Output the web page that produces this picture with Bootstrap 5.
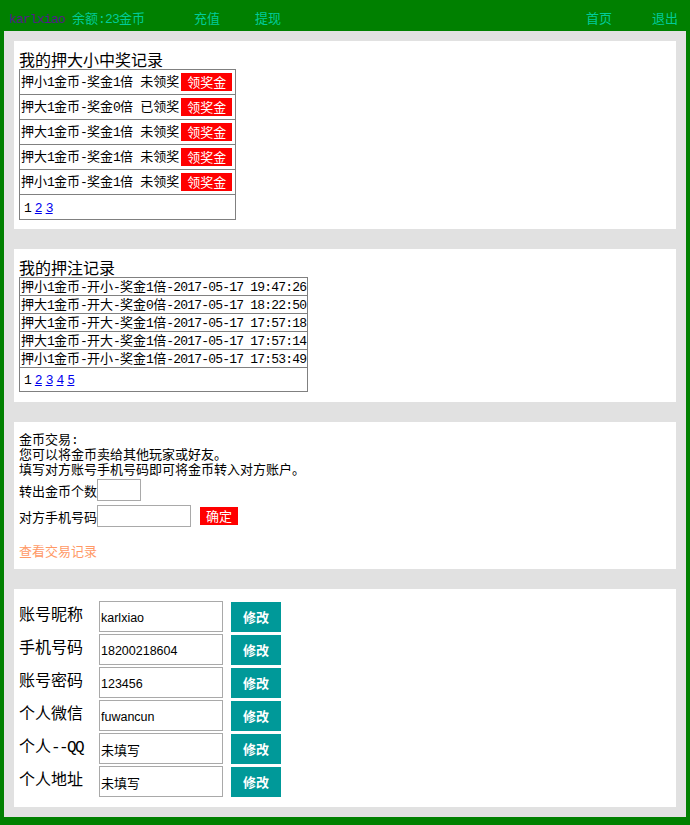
<!DOCTYPE html>
<html lang="zh-CN">
<head>
<meta charset="utf-8">
<title>我的账户</title>
<link href="https://cdn.jsdelivr.net/npm/bootstrap@5.3.0/dist/css/bootstrap.min.css" rel="stylesheet">
<style>
html,body{height:825px;overflow:hidden}
body{background:#008000;font-family:"Noto Sans CJK SC","Liberation Sans",sans-serif;font-size:13px;line-height:15px;color:#000;font-weight:400}
.ml{font-family:"Liberation Mono","Noto Sans CJK SC",monospace;font-size:13px;letter-spacing:-.8px;line-height:0}
.top-strip{height:31px;color:#00cc99;padding:10px 12px 0 9px;white-space:nowrap}
.top-strip a{color:#00cc99;text-decoration:none}
.top-strip .who{color:#551a8b;width:63px;line-height:15px;padding-top:2px}
.top-strip .bal{width:122px}
.top-strip .lnk{width:61px}
.top-strip .out{width:66px}
.top-strip .lnk-end{width:26px}
.sheet{background:#e1e1e1;margin:0 4px;padding:10px;height:786px}
.pane{background:#fff;padding:9px 5px 10px;margin-bottom:20px}
.pane:last-child{margin-bottom:0}
.pane-1{height:188px}.pane-2{height:153px}.pane-3{height:147px}.pane-4{height:218px;padding-top:12px}
.pane-title{font-size:16px;line-height:18px;height:19px}
.rec{border:1px solid #808080;border-collapse:collapse}
.rec td{border:1px solid #808080;padding:0 1px;white-space:nowrap;vertical-align:middle}
.rec-a tr{height:25px}
.rec-b td{height:18px;line-height:13px;padding-bottom:2px}
.rec td.pager{height:24px;padding:0 0 2px 4px;line-height:13px}
.pager-text{word-spacing:-3.2px}
.rec .pager a{color:#0000ee}
.pay-btn{display:inline-block;background:#f00;color:#fff;width:51px;height:18px;line-height:18px;text-align:center;border:0;padding:0;border-radius:0;font-size:13px;margin:0 2px 0 2px;vertical-align:middle}
.trade-row{height:22px;margin-top:4px}
.trade-row.first{margin-top:3px}
.trade-field{height:22px;border:1px solid #a9a9a9;padding:0 2px;border-radius:0;background:#fff;outline:0}
.w-a{width:44px}.w-b{width:94px}
.ok-btn{background:#f00;color:#fff;width:38px;height:18px;line-height:18px;border:0;padding:0;border-radius:0;font-size:13px;margin-left:9px}
.trade-link{display:block;color:#ff9966;text-decoration:none;margin-top:16px}
.acct-row{height:31px;margin-bottom:2px;font-size:16px}
.acct-row .ml{font-size:16px;letter-spacing:-1.6px;font-weight:400}
.acct-label{width:80px;line-height:18px;height:26px}
.acct-field{width:124px;height:31px;border:1px solid #a9a9a9;border-radius:0;padding:2px 1px 0;font-size:12.5px;font-family:"Liberation Sans",sans-serif;color:#000;outline:0;background:#fff}
.acct-field.cjk{font-family:"Noto Sans CJK SC",sans-serif;font-size:13px}
.fix-btn{width:50px;height:30px;background:#009999;color:#fff;border:0;border-radius:0;padding:0;margin-left:8px;font-size:13px;font-weight:700;align-self:flex-end;line-height:30px}
</style>
</head>
<body>
<div class="top-strip d-flex">
  <a class="who ml" href="#">karlxiao</a>
  <span class="bal">余额<span class="ml">:23</span>金币</span>
  <a class="lnk" href="#">充值</a>
  <a class="lnk-end" href="#">提现</a>
  <a class="out ms-auto" href="#">首页</a>
  <a class="lnk-end" href="#">退出</a>
</div>
<div class="sheet">
  <div class="pane pane-1">
    <div class="pane-title">我的押大小中奖记录</div>
    <table class="rec rec-a">
      <tr><td>押小<span class="ml">1</span>金币<span class="ml">-</span>奖金<span class="ml">1</span>倍<span class="ml">&nbsp;</span>未领奖<button class="pay-btn">领奖金</button></td></tr>
      <tr><td>押大<span class="ml">1</span>金币<span class="ml">-</span>奖金<span class="ml">0</span>倍<span class="ml">&nbsp;</span>已领奖<button class="pay-btn">领奖金</button></td></tr>
      <tr><td>押大<span class="ml">1</span>金币<span class="ml">-</span>奖金<span class="ml">1</span>倍<span class="ml">&nbsp;</span>未领奖<button class="pay-btn">领奖金</button></td></tr>
      <tr><td>押大<span class="ml">1</span>金币<span class="ml">-</span>奖金<span class="ml">1</span>倍<span class="ml">&nbsp;</span>未领奖<button class="pay-btn">领奖金</button></td></tr>
      <tr><td>押小<span class="ml">1</span>金币<span class="ml">-</span>奖金<span class="ml">1</span>倍<span class="ml">&nbsp;</span>未领奖<button class="pay-btn">领奖金</button></td></tr>
      <tr><td class="pager"><span class="ml pager-text">1 <a href="#">2</a> <a href="#">3</a></span></td></tr>
    </table>
  </div>
  <div class="pane pane-2">
    <div class="pane-title">我的押注记录</div>
    <table class="rec rec-b">
      <tr><td>押小<span class="ml">1</span>金币<span class="ml">-</span>开小<span class="ml">-</span>奖金<span class="ml">1</span>倍<span class="ml">-2017-05-17 19:47:26</span></td></tr>
      <tr><td>押大<span class="ml">1</span>金币<span class="ml">-</span>开大<span class="ml">-</span>奖金<span class="ml">0</span>倍<span class="ml">-2017-05-17 18:22:50</span></td></tr>
      <tr><td>押大<span class="ml">1</span>金币<span class="ml">-</span>开大<span class="ml">-</span>奖金<span class="ml">1</span>倍<span class="ml">-2017-05-17 17:57:18</span></td></tr>
      <tr><td>押大<span class="ml">1</span>金币<span class="ml">-</span>开大<span class="ml">-</span>奖金<span class="ml">1</span>倍<span class="ml">-2017-05-17 17:57:14</span></td></tr>
      <tr><td>押小<span class="ml">1</span>金币<span class="ml">-</span>开小<span class="ml">-</span>奖金<span class="ml">1</span>倍<span class="ml">-2017-05-17 17:53:49</span></td></tr>
      <tr><td class="pager"><span class="ml pager-text">1 <a href="#">2</a> <a href="#">3</a> <a href="#">4</a> <a href="#">5</a></span></td></tr>
    </table>
  </div>
  <div class="pane pane-3">
    <div>金币交易<span class="ml">:</span></div>
    <div>您可以将金币卖给其他玩家或好友。</div>
    <div>填写对方账号手机号码即可将金币转入对方账户。</div>
    <div class="trade-row first d-flex align-items-center">转出金币个数<input class="trade-field w-a" type="text"></div>
    <div class="trade-row d-flex align-items-center">对方手机号码<input class="trade-field w-b" type="text"><button class="ok-btn">确定</button></div>
    <a class="trade-link" href="#">查看交易记录</a>
  </div>
  <div class="pane pane-4">
    <div class="acct-row d-flex align-items-center"><span class="acct-label">账号昵称</span><input class="acct-field" type="text" value="karlxiao"><button class="fix-btn">修改</button></div>
    <div class="acct-row d-flex align-items-center"><span class="acct-label">手机号码</span><input class="acct-field" type="text" value="18200218604"><button class="fix-btn">修改</button></div>
    <div class="acct-row d-flex align-items-center"><span class="acct-label">账号密码</span><input class="acct-field" type="text" value="123456"><button class="fix-btn">修改</button></div>
    <div class="acct-row d-flex align-items-center"><span class="acct-label">个人微信</span><input class="acct-field" type="text" value="fuwancun"><button class="fix-btn">修改</button></div>
    <div class="acct-row d-flex align-items-center"><span class="acct-label">个人<span class="ml">--QQ</span></span><input class="acct-field cjk" type="text" value="未填写"><button class="fix-btn">修改</button></div>
    <div class="acct-row d-flex align-items-center"><span class="acct-label">个人地址</span><input class="acct-field cjk" type="text" value="未填写"><button class="fix-btn">修改</button></div>
  </div>
</div>
<script src="https://cdn.jsdelivr.net/npm/bootstrap@5.3.0/dist/js/bootstrap.bundle.min.js"></script>
</body>
</html>
